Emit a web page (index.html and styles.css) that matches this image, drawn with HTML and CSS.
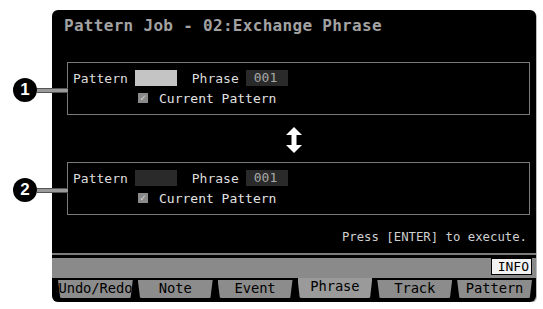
FILE: index.html
```html
<!DOCTYPE html>
<html lang="en">
<head>
  <meta charset="UTF-8" />
  <title>Pattern Job - Exchange Phrase</title>
  <link rel="stylesheet" href="styles.css">
</head>
<body>
  <div class="screen">
    <div class="title">Pattern Job - 02:Exchange Phrase</div>

    <div class="group">
      <div class="callout"><span class="num">1</span><span class="lead"></span></div>
      <div class="row">
        <span class="label">Pattern</span>
        <span class="val light"></span>
        <span class="label phrase">Phrase</span>
        <span class="val">001</span>
      </div>
      <div class="row check-row">
        <span class="check">&#10003;</span>
        <span class="check-text">Current Pattern</span>
      </div>
    </div>

    <div class="swap">
      <svg width="16" height="26" viewBox="0 0 16 26">
        <path d="M8 0 L16 8 L10.5 8 L10.5 18 L16 18 L8 26 L0 18 L5.5 18 L5.5 8 L0 8 Z" fill="#fff"/>
      </svg>
    </div>

    <div class="group second">
      <div class="callout"><span class="num">2</span><span class="lead"></span></div>
      <div class="row">
        <span class="label">Pattern</span>
        <span class="val"></span>
        <span class="label phrase">Phrase</span>
        <span class="val">001</span>
      </div>
      <div class="row check-row">
        <span class="check">&#10003;</span>
        <span class="check-text">Current Pattern</span>
      </div>
    </div>

    <div class="hint">Press [ENTER] to execute.</div>

    <div class="rule"></div>
    <div class="bar"><span class="info">INFO</span></div>
    <div class="tabs">
      <div class="tab">Undo/Redo</div>
      <div class="tab">Note</div>
      <div class="tab">Event</div>
      <div class="tab active">Phrase</div>
      <div class="tab">Track</div>
      <div class="tab">Pattern</div>
    </div>
  </div>
</body>
</html>
```

FILE: styles.css
```css
body {
  margin: 0;
  background: #fff;
  font-family: "DejaVu Sans Mono", "Liberation Mono", monospace;
}
.screen {
  margin: 10px 0 0 52px;
  width: 484px;
  height: 292px;
  background: #000;
  border-radius: 6px;
  box-shadow: 1px 1px 0 #bbb;
  display: flex;
  flex-direction: column;
}
.title {
  padding: 6px 0 0 12px;
  height: 19px;
  line-height: 19px;
  font-size: 16px;
  letter-spacing: 0.3px;
  font-weight: bold;
  color: #a2a2a2;
}
.group {
  position: relative;
  margin: 27px 0 0 15px;
  width: 456px;
  height: 51px;
  border: 1px solid #7a7a7a;
  padding: 0 0 0 5px;
}
.group.second { margin-top: 9px; }
.row {
  display: flex;
  align-items: center;
  height: 16px;
  margin-top: 7px;
  font-size: 13px;
  color: #dcdcdc;
}
.check-row { margin-top: 4px; padding-left: 65px; }
.val {
  display: inline-block;
  width: 42px;
  height: 16px;
  margin-left: 7px;
  background: #2a2a2a;
  color: #a8a8a8;
  line-height: 16px;
  padding-left: 8px;
  box-sizing: border-box;
  font-size: 13px;
}
.val.light { background: #c4c4c4; }
.phrase { margin-left: 15px; }
.check {
  width: 10px;
  height: 10px;
  background: #8a8a8a;
  color: #d0d0d0;
  font-size: 10px;
  line-height: 10px;
  text-align: center;
  font-weight: bold;
}
.check-text { margin-left: 11px; color: #e2e2e2; }
.callout {
  position: absolute;
  left: -55px;
  top: 15px;
  display: flex;
  align-items: center;
}
.num {
  width: 24px;
  height: 24px;
  border-radius: 50%;
  background: #000;
  color: #fff;
  font-family: "Liberation Sans", Arial, sans-serif;
  font-weight: bold;
  font-size: 17px;
  line-height: 24px;
  text-align: center;
}
.lead {
  width: 31px;
  height: 3px;
  background: #9a9a9a;
  border-top: 1px solid #555;
  border-bottom: 1px solid #555;
}
.swap {
  display: flex;
  justify-content: center;
  margin: 12px 0 0 -1px;
  height: 26px;
}
.hint {
  margin-top: 15px;
  padding-right: 9px;
  text-align: right;
  font-size: 12.3px;
  line-height: 14px;
  color: #cfcfcf;
}
.rule {
  margin-top: 9px;
  height: 2px;
  background: #7c7c7c;
}
.bar {
  margin-top: 3px;
  height: 20px;
  background: #8a8a8a;
  display: flex;
  justify-content: flex-end;
  padding-right: 4px;
}
.info {
  height: 15px;
  padding: 0 2px 0 6px;
  background: #f2f2f2;
  border: 1px solid #000;
  font-size: 13px;
  line-height: 15px;
  color: #000;
}
.tabs {
  display: grid;
  grid-template-columns: repeat(6, 1fr);
  gap: 5px;
  padding: 0 4px 0 6px;
}
.tab {
  margin-top: 2px;
  height: 18px;
  background: #8c8c8c;
  border-radius: 0 0 4px 4px;
  font-size: 13.8px;
  line-height: 17px;
  text-align: center;
  color: #000;
  letter-spacing: -0.1px;
  clip-path: polygon(0 0, 100% 0, 97% 100%, 3% 100%);
}
.tab.active {
  margin-top: 0;
  height: 20px;
  background: #9a9a9a;
}
```
